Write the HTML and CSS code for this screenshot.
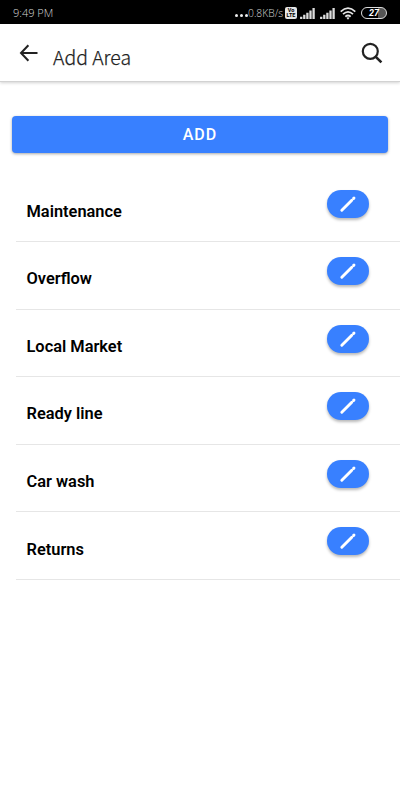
FILE: index.html
```
<!DOCTYPE html>
<html lang="en">
<head>
<meta charset="utf-8">
<title>Add Area</title>
<link rel="stylesheet" href="styles.css">
</head>
<body>
<svg width="0" height="0" class="defs">
  <symbol id="pencil" viewBox="0 0 20 20"><path d="M3.8 16.2L13.8 6.2" stroke="#fff" stroke-width="2.9" stroke-linecap="round"/><path d="M15.6 4.4L16 4" stroke="#fff" stroke-width="2.9" stroke-linecap="round"/></symbol>
  <symbol id="signal" viewBox="0 0 15 11"><path d="M1.2 11V8.8M4.3 11V6.8M7.4 11V4.8M10.5 11V2.6M13.6 11V0" stroke="#ddd" stroke-width="2.3"/></symbol>
</svg>
<div class="status">
  <span class="time">9:49 PM</span>
  <div class="indicators">
    <span class="dots"><i></i><i></i><i></i></span>
    <span class="speed">0.8KB/s</span>
    <span class="volte"><b>Vo</b><b>LTE</b></span>
    <svg class="signal"><use href="#signal"/></svg>
    <svg class="signal second"><use href="#signal"/></svg>
    <svg class="wifi" viewBox="0 0 16 13" fill="none" stroke="#e6e6e6" stroke-width="1.7"><path d="M.7 4.6Q8-2.2 15.3 4.6M3 7.2Q8 2.6 13 7.2M5.3 9.7Q8 7.3 10.7 9.7"/><path d="M6.4 10.8Q8 9.6 9.6 10.8L8 12.8Z" fill="#e6e6e6" stroke="none"/></svg>
    <span class="battery">27</span>
  </div>
</div>
<header class="toolbar">
  <svg class="back" viewBox="0 0 20 18" fill="none" stroke="#222" stroke-width="2"><path d="M9.4 1.2L2 9L9.4 16.8M2 9H18.5"/></svg>
  <h1>Add Area</h1>
  <svg class="search" viewBox="0 0 22 22" fill="none" stroke="#222" stroke-width="2.2"><circle cx="9.3" cy="9.3" r="7.5"/><path d="M14.8 14.8L20.4 20.4" stroke-width="2.6"/></svg>
</header>
<main>
  <button class="add">ADD</button>
  <ul class="areas">
    <li><span>Maintenance</span><button class="edit" aria-label="Edit"><svg><use href="#pencil"/></svg></button></li>
    <li><span>Overflow</span><button class="edit" aria-label="Edit"><svg><use href="#pencil"/></svg></button></li>
    <li><span>Local Market</span><button class="edit" aria-label="Edit"><svg><use href="#pencil"/></svg></button></li>
    <li><span>Ready line</span><button class="edit" aria-label="Edit"><svg><use href="#pencil"/></svg></button></li>
    <li><span>Car wash</span><button class="edit" aria-label="Edit"><svg><use href="#pencil"/></svg></button></li>
    <li><span>Returns</span><button class="edit" aria-label="Edit"><svg><use href="#pencil"/></svg></button></li>
  </ul>
</main>
</body>
</html>
```
FILE: styles.css
```
* { box-sizing: border-box; }
body { margin: 0; height: 800px; overflow: hidden; background: #fff; font-family: Roboto, sans-serif; }
.defs { position: absolute; }
.status { height: 24px; background: #000; color: #d4d4d4; display: flex; align-items: center; justify-content: space-between; padding: 2px 13px 0; }
.time { font: 300 11px "Open Sans", sans-serif; margin-top: -1px; }
.indicators { display: flex; align-items: center; height: 22px; }
.dots { display: flex; gap: 1.5px; padding-top: 5px; }
.dots i { width: 3.3px; height: 3.3px; border-radius: 50%; background: #eee; }
.speed { width: 37px; font: 300 10.3px "Open Sans", sans-serif; white-space: nowrap; }
.volte { width: 12px; height: 12px; margin-right: 3px; border-radius: 2px; background: #e5e5e5; color: #000; display: flex; flex-direction: column; align-items: center; justify-content: center; }
.volte b { font-size: 5.5px; line-height: 5px; }
.signal { width: 15px; height: 11px; margin-right: 5px; }
.wifi { width: 16px; height: 13px; margin-right: 5px; }
.battery { width: 26px; height: 12px; border: 1.3px solid #ddd; border-radius: 6px; background: linear-gradient(90deg, #000 65%, #555 65%); color: #fff; font: italic 700 9px/10.5px Roboto, sans-serif; text-align: center; }
.toolbar { height: 58px; display: flex; align-items: flex-start; padding: 0 17px 0 19px; background: #fff; border-bottom: 1px solid #d2d2d2; box-shadow: 0 1px 3px rgba(0,0,0,.18); }
.back { width: 20px; height: 18px; margin-top: 20px; }
h1 { margin: 20px 0 0 14px; font: 300 19.4px/26px "Noto Sans CJK SC", sans-serif; color: #222; -webkit-text-stroke: .25px #222; flex: 1; }
.search { width: 22px; height: 22px; margin-top: 18px; }
main { padding-top: 34px; }
button { border: 0; padding: 0; background: #3880ff; }
.add { display: block; width: 376px; height: 37px; margin: 0 auto; border-radius: 4px; color: #fff; font: 500 16px/37px Roboto, sans-serif; letter-spacing: 1px; box-shadow: 0 1px 3px rgba(0,0,0,.35); }
.areas { list-style: none; margin: 21.5px 0 0 16px; padding: 0; }
.areas li { height: 67.6px; display: flex; align-items: flex-start; justify-content: space-between; padding: 15px 31px 0 10.5px; border-bottom: 1.5px solid #e6e6e6; }
.areas span { margin-top: 12.2px; font-size: 16.4px; line-height: 20px; font-weight: 600; color: #000; }
.edit { width: 42.5px; height: 28px; border-radius: 14px; display: flex; align-items: center; justify-content: center; box-shadow: 0 2px 3px rgba(0,0,0,.28); }
.edit svg { width: 20px; height: 20px; }
```
